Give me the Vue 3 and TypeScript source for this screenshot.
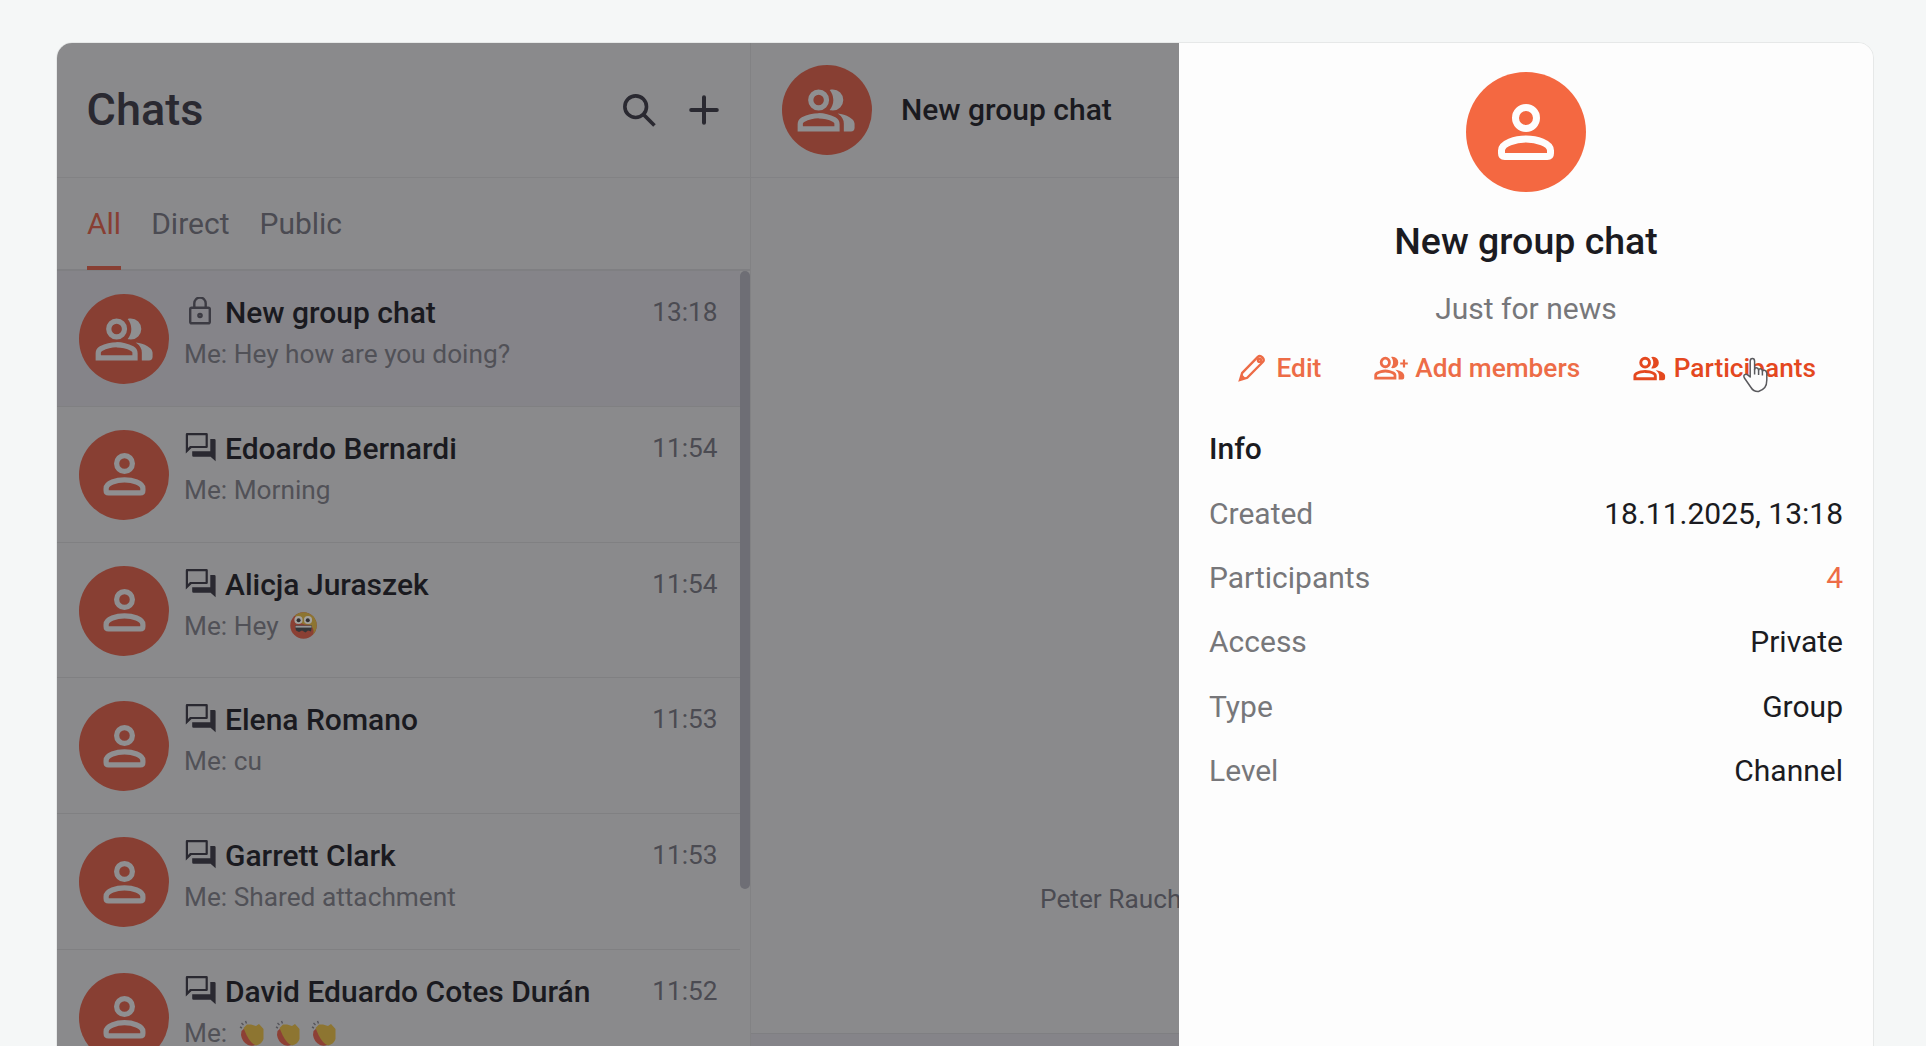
<script lang="ts" setup>
// * Types
interface Chat {
  name: string
  message: string
  time: string
  icon: 'lock' | 'forum'
  emoji?: 'grin' | 'clap'
  emojiCount?: number
}

interface InfoRow {
  label: string
  value: string
  accent?: boolean
}
// * Types

import { ref } from 'vue'

const tabs: string[] = ['All', 'Direct', 'Public']
const activeTab = ref('All')
const activeChat = ref(0)

const chats: Chat[] = [
  { name: 'New group chat', message: 'Me: Hey how are you doing?', time: '13:18', icon: 'lock' },
  { name: 'Edoardo Bernardi', message: 'Me: Morning', time: '11:54', icon: 'forum' },
  { name: 'Alicja Juraszek', message: 'Me: Hey', time: '11:54', icon: 'forum', emoji: 'grin', emojiCount: 1 },
  { name: 'Elena Romano', message: 'Me: cu', time: '11:53', icon: 'forum' },
  { name: 'Garrett Clark', message: 'Me: Shared attachment', time: '11:53', icon: 'forum' },
  { name: 'David Eduardo Cotes Durán', message: 'Me:', time: '11:52', icon: 'forum', emoji: 'clap', emojiCount: 3 },
]

const info: InfoRow[] = [
  { label: 'Created', value: '18.11.2025, 13:18' },
  { label: 'Participants', value: '4', accent: true },
  { label: 'Access', value: 'Private' },
  { label: 'Type', value: 'Group' },
  { label: 'Level', value: 'Channel' },
]

const groupPath = 'M1 20v-2.8q0-.85.438-1.562T2.6 14.55q1.55-.775 3.15-1.162T9 13t3.25.388 3.15 1.162q.725.375 1.163 1.088T17 17.2V20zm17.6 0v-3q0-1.1-.612-2.113T16.25 13.15q1.275.15 2.4.513t2.1.887q.9.5 1.375 1.112T22.7 17v1.6q0 1.4-1.4 1.4zM9 12q-1.65 0-2.825-1.175T5 8t1.175-2.825T9 4t2.825 1.175T13 8t-1.175 2.825T9 12m9.4-4q0 1.65-1.175 2.825T14.4 12q-.275 0-.7-.062t-.5-.138q.675-.8 1.038-1.775T14.6 8t-.362-2.025T13.2 4.2q.35-.125.5-.163T14.4 4q1.65 0 2.825 1.175T18.4 8M3 18h12v-.8q0-.275-.137-.5t-.363-.35q-1.35-.675-2.725-1.012T9 15t-2.775.338T3.5 16.35q-.225.125-.363.35T3 17.2zm6-8q.825 0 1.413-.587T11 8t-.587-1.412T9 6t-1.412.588T7 8t.588 1.413T9 10'
const personBody = 'M5 17.3C5 15.2 9 14 12 14S19 15.2 19 17.3V18.1Q19 19 18.1 19H5.9Q5 19 5 18.1Z'
</script>

<template>
  <div class="page">
    <div class="app">

      <aside class="sidebar">
        <header class="sidebar__header">
          <h1 class="sidebar__title">Chats</h1>
          <div class="sidebar__tools">
            <svg class="sidebar__search" viewBox="0 0 32 32">
              <circle cx="12.3" cy="12.3" r="10.5" />
              <path d="M20 20L30.5 30.5" />
            </svg>
            <svg class="sidebar__plus" viewBox="0 0 30 30">
              <path d="M15 2.2V27.8M2.2 15H27.8" />
            </svg>
          </div>
        </header>

        <nav class="tabs">
          <button
            v-for="tab in tabs"
            :key="tab"
            class="tabs__item"
            :class="{ 'tabs__item--active': tab === activeTab }"
            @click="activeTab = tab"
          >{{ tab }}</button>
        </nav>

        <div class="sidebar__body">
          <ul class="chats">
            <li
              v-for="(chat, index) in chats"
              :key="chat.name"
              class="chat"
              :class="{ 'chat--active': index === activeChat }"
              @click="activeChat = index"
            >
              <div class="avatar">
                <svg v-if="chat.icon === 'lock'" class="avatar__icon" viewBox="0 0 24 24"><path :d="groupPath" /></svg>
                <svg v-else class="avatar__icon avatar__icon--line" viewBox="0 0 24 24">
                  <circle cx="12" cy="7.8" r="3" />
                  <path :d="personBody" />
                </svg>
              </div>

              <div class="chat__text">
                <div class="chat__top">
                  <svg v-if="chat.icon === 'lock'" class="chat__icon chat__icon--lock" viewBox="0 0 32 30">
                    <rect x="5.2" y="10.7" width="19.6" height="15.6" rx="1.6" />
                    <path d="M9.3 10.7V6.3A5.7 5.7 0 0 1 20.7 6.3V10.7" />
                    <circle cx="15" cy="18.5" r="1.6" />
                  </svg>
                  <svg v-else class="chat__icon" viewBox="0 0 32 30">
                    <path fill-rule="evenodd" d="M2 1H21.5Q22.8 1 22.8 2.3V14.8Q22.8 16.1 21.5 16.1H6.5L.8 21.5V2.3Q.8 1 2 1ZM3 3.2V16L5 13.9H20.6V3.2Z" />
                    <path d="M25.3 7H29.3Q30.6 7 30.6 8.3V29.3L25.6 24.7H8.5Q7.2 24.7 7.2 23.4V19.3H25.3Z" />
                  </svg>
                  <span class="chat__name">{{ chat.name }}</span>
                  <span class="chat__time">{{ chat.time }}</span>
                </div>
                <div class="chat__message">
                  <span>{{ chat.message }}</span>
                  <template v-if="chat.emoji === 'grin'">
                    <svg class="emoji emoji--grin" viewBox="0 0 27 27">
                      <circle cx="13.5" cy="13.5" r="13.2" fill="#8b4034" />
                      <path d="M5 3.5A13.2 13.2 0 0 1 26.7 13.5A13 13 0 0 1 23 22.5Q25 17 20 13Q8 13 5 3.5Z" fill="#8d7531" />
                      <circle cx="8.5" cy="8" r="4.1" fill="#a3a19d" />
                      <circle cx="18" cy="8" r="4.1" fill="#a3a19d" />
                      <circle cx="8.6" cy="8.2" r="2" fill="#302e30" />
                      <circle cx="17.8" cy="8.2" r="2" fill="#302e30" />
                      <path d="M5 13.4H22L21 19.5L18 18.5L15.5 20.5L12 18.5L9 20L6 18.5Z" fill="#343638" />
                      <path d="M5.5 13.8H21.5V15.6H5.5Z" fill="#969698" />
                    </svg>
                  </template>
                  <template v-else-if="chat.emoji === 'clap'">
                    <svg v-for="n in chat.emojiCount" :key="n" class="emoji emoji--clap" viewBox="0 0 26 27">
                      <path d="M2.5 11L7 7L18 24Q14 27 9 25Q3 22 2 15Z" fill="#8d4035" />
                      <path d="M4.5 8L8 4.5L12 4.5L17 6L20 4L24.5 9V19Q23 24 17 25.5Q12 24 7.5 15Z" fill="#8d7531" />
                      <path d="M1 7L3 8M2.5 3L4.5 5M6.5 1L7.5 3.5" stroke="#55545a" stroke-width="1.4" />
                    </svg>
                  </template>
                </div>
              </div>
            </li>
          </ul>
          <div class="scrollbar"><div class="scrollbar__thumb"></div></div>
        </div>
      </aside>

      <main class="conversation">
        <header class="conversation__header">
          <div class="avatar">
            <svg class="avatar__icon" viewBox="0 0 24 24"><path :d="groupPath" /></svg>
          </div>
          <span class="conversation__title">New group chat</span>
        </header>
        <div class="conversation__feed">
          <span class="conversation__event">Peter Rauch</span>
        </div>
        <footer class="conversation__composer"></footer>
      </main>

      <section class="panel">
        <div class="avatar avatar--large">
          <svg class="avatar__icon avatar__icon--line" viewBox="0 0 24 24">
            <circle cx="12" cy="8" r="3" />
            <path :d="personBody" />
          </svg>
        </div>
        <h2 class="panel__title">New group chat</h2>
        <p class="panel__description">Just for news</p>

        <div class="actions">
          <button class="actions__item actions__item--edit">
            <svg class="actions__pencil" viewBox="0 0 28 28">
              <path d="M2 26L4.2 18.8L19.8 2.8Q22 .9 24.4 3.4T24.8 8L9.2 23.8Z" />
              <path d="M1.5 26.5L3.6 20L8 24.4Z" class="actions__tip" />
              <circle cx="21.5" cy="6.3" r="1.6" />
            </svg>
            <span>Edit</span>
          </button>
          <button class="actions__item actions__item--add">
            <svg class="actions__add" viewBox="0 0 36 26">
              <path transform="translate(-.1 -4) scale(1.38 1.43)" :d="groupPath" />
              <path d="M31 4.5V12.5M27.2 8.5H34.8" fill="none" stroke="currentColor" stroke-width="2.2" />
            </svg>
            <span>Add members</span>
          </button>
          <button class="actions__item actions__item--hover">
            <svg class="actions__group" viewBox="0 0 24 24"><path :d="groupPath" /></svg>
            <span>Participants</span>
            <svg class="cursor" viewBox="0 0 28 37">
              <path d="M8.2 20V4.2Q8.2 1.5 10.4 1.5T12.6 4.2V12.5Q12.8 10.8 14.5 10.8T16.6 13Q17 11.6 18.5 11.8T20.4 14.2Q21 13 22.6 13.2T24.8 16V23Q24.8 28 22.8 30.5T16.5 34.5Q11.5 34.8 9 30.5L2.6 21.3Q1 18.6 2.8 17.6T6 18.2Z" />
              <path d="M12.6 12V17.5M16.6 13V18M20.4 14.2V18.5" />
            </svg>
          </button>
        </div>

        <h3 class="panel__subtitle">Info</h3>
        <dl class="info">
          <div v-for="row in info" :key="row.label" class="info__row">
            <dt class="info__label">{{ row.label }}</dt>
            <dd class="info__value" :class="{ 'info__value--accent': row.accent }">{{ row.value }}</dd>
          </div>
        </dl>
      </section>

    </div>
  </div>
</template>

<style>
body {
  margin: 0;
  overflow: hidden;
  background-color: #f5f7f7;
}
</style>

<style scoped>
.page {
  box-sizing: border-box;
  height: 100vh;
  padding: 42px 52px 0 56px;
  overflow: hidden;
  font-family: Roboto, sans-serif;
  color: #1b1b21;
}

.app {
  box-sizing: border-box;
  display: flex;
  height: 1100px;
  border: 1px solid #e6e8e8;
  border-radius: 16px;
  overflow: hidden;
}

button {
  padding: 0;
  border: 0;
  background: none;
  font: inherit;
  color: inherit;
}

h1,
h2,
h3,
p,
ul,
dl,
dd {
  margin: 0;
  padding: 0;
}

/*
  * Avatar
*/

.avatar {
  display: flex;
  flex: none;
  align-items: center;
  justify-content: center;
  width: 90px;
  height: 90px;
  border-radius: 50%;
  background-color: #883f33;
  color: #8f8f91;
}

.avatar__icon {
  width: 63px;
  height: 63px;
  fill: currentColor;
}

.avatar__icon--line {
  fill: none;
  stroke: currentColor;
  stroke-width: 2;
}

.avatar--large {
  width: 120px;
  height: 120px;
  background-color: #f46841;
  color: #fdfdfd;
}

.avatar--large .avatar__icon {
  width: 84px;
  height: 84px;
}

/*
  * Sidebar
*/

.sidebar {
  box-sizing: border-box;
  display: flex;
  flex: none;
  flex-direction: column;
  width: 694px;
  border-right: 1px solid #828284;
  background-color: #8a8a8c;
}

.sidebar__header {
  box-sizing: border-box;
  display: flex;
  flex: none;
  align-items: center;
  justify-content: space-between;
  height: 135px;
  padding: 0 31.5px 0 29.5px;
  border-bottom: 1px solid #828284;
}

.sidebar__title {
  padding-bottom: 2px;
  font-size: 45px;
  font-weight: 500;
  color: #2a2931;
}

.sidebar__tools {
  display: flex;
  align-items: center;
  gap: 33px;
  fill: none;
  stroke: #2a2931;
  stroke-width: 3.5;
}

.sidebar__search {
  width: 33px;
  height: 33px;
}

.sidebar__plus {
  width: 30px;
  height: 30px;
  stroke-width: 4;
  stroke-linecap: round;
}

.tabs {
  box-sizing: border-box;
  display: flex;
  flex: none;
  gap: 30px;
  height: 93px;
  padding: 0 30px;
  border-bottom: 2px solid #7f7f82;
}

.tabs__item {
  box-sizing: border-box;
  height: 92px;
  padding-top: 2px;
  border-bottom: 4px solid transparent;
  font-size: 30px;
  color: #4b4b52;
}

.tabs__item--active {
  border-color: #883f33;
  color: #883f33;
}

.sidebar__body {
  display: flex;
  flex: 1;
  min-height: 0;
}

.chats {
  flex: 1;
  overflow: hidden;
  list-style: none;
}

.chat {
  box-sizing: border-box;
  display: flex;
  gap: 15px;
  height: 135.8px;
  padding: 23px 22.5px 0 22px;
  border-bottom: 1px solid #808082;
}

.chat--active {
  background-color: #858489;
}

.chat__text {
  flex: 1;
  padding-top: 1px;
}

.chat__top {
  display: flex;
  align-items: flex-start;
  height: 42px;
}

.chat__icon {
  width: 32px;
  height: 30px;
  margin: 1px 7px 0 1px;
  fill: #2a2931;
}

.chat__icon--lock {
  margin: 2px 7px 0 1px;
  fill: none;
  stroke: #3c3b43;
  stroke-width: 2.4;
}

.chat__name {
  margin-left: 1px;
  font-size: 30px;
  font-weight: 500;
  line-height: 36px;
  color: #1a1a20;
}

.chat__time {
  margin-left: auto;
  font-size: 26.25px;
  line-height: 34px;
  color: #4b4b52;
}

.chat__message {
  display: flex;
  font-size: 26.25px;
  line-height: 34px;
  color: #515157;
}

.emoji--grin {
  width: 27px;
  height: 27px;
  margin: 3px 0 0 11px;
}

.emoji--clap {
  width: 26px;
  height: 27px;
  margin: 4px 0 0 10px;
}

.emoji--clap:nth-of-type(1) {
  margin-left: 12px;
}

.scrollbar {
  width: 10px;
}

.scrollbar__thumb {
  height: 618px;
  border-radius: 5px;
  background-color: #6e6e75;
}

/*
  * Conversation
*/

.conversation {
  display: flex;
  flex: 1;
  flex-direction: column;
  min-width: 0;
  overflow: hidden;
  background-color: #8a8a8c;
}

.conversation__header {
  box-sizing: border-box;
  display: flex;
  align-items: center;
  gap: 29.5px;
  height: 135px;
  padding-left: 30.5px;
  border-bottom: 1px solid #828285;
}

.conversation__title {
  padding-bottom: 2px;
  font-size: 30px;
  font-weight: 500;
  color: #1a1a20;
}

.conversation__feed {
  display: flex;
  align-items: flex-end;
  box-sizing: border-box;
  height: 855px;
  padding: 0 0 117px 289px;
}

.conversation__event {
  font-size: 26.25px;
  line-height: 34px;
  white-space: nowrap;
  color: #4b4b52;
}

.conversation__composer {
  flex: 1;
  border-top: 1px solid #7f7f82;
  background-color: #858489;
}

/*
  * Panel
*/

.panel {
  box-sizing: border-box;
  display: flex;
  flex: none;
  flex-direction: column;
  align-items: center;
  width: 694px;
  padding: 29px 30px 0;
  background-color: #fdfdfd;
}

.panel__title {
  margin-top: 27px;
  font-size: 37.5px;
  font-weight: 500;
  line-height: 44px;
}

.panel__description {
  margin-top: 28px;
  font-size: 30px;
  line-height: 36px;
  color: #77777a;
}

.actions {
  align-self: stretch;
  display: flex;
  gap: 51.5px;
  margin: 21px 0 0 29px;
  font-size: 26.25px;
  font-weight: 500;
  line-height: 40px;
  color: #ed6c47;
}

.actions__item {
  position: relative;
  display: flex;
  align-items: center;
  gap: 6.5px;
  white-space: nowrap;
}

.actions__item--edit {
  gap: 10.5px;
}

.actions__item--hover {
  gap: 7px;
  color: #e4481f;
}

.actions__pencil {
  width: 28px;
  height: 28px;
  fill: none;
  stroke: currentColor;
  stroke-width: 2.4;
}

.actions__tip {
  fill: currentColor;
  stroke: none;
}

.actions__add {
  width: 36px;
  height: 26px;
  fill: currentColor;
}

.actions__group {
  width: 35px;
  height: 35px;
  fill: currentColor;
}

.cursor {
  position: absolute;
  left: 110px;
  top: 9px;
  width: 28px;
  height: 37px;
  fill: #fdfdfd;
  stroke: #5a5a5e;
  stroke-width: 1.5;
  stroke-linejoin: round;
}

.panel__subtitle {
  align-self: flex-start;
  margin-top: 43px;
  font-size: 30px;
  font-weight: 500;
  line-height: 36px;
}

.info {
  align-self: stretch;
  display: flex;
  flex-direction: column;
  gap: 28.4px;
  margin-top: 28.6px;
}

.info__row {
  display: flex;
  justify-content: space-between;
  font-size: 30px;
  line-height: 36px;
}

.info__label {
  color: #77777a;
}

.info__value--accent {
  color: #ed6c47;
}
</style>
